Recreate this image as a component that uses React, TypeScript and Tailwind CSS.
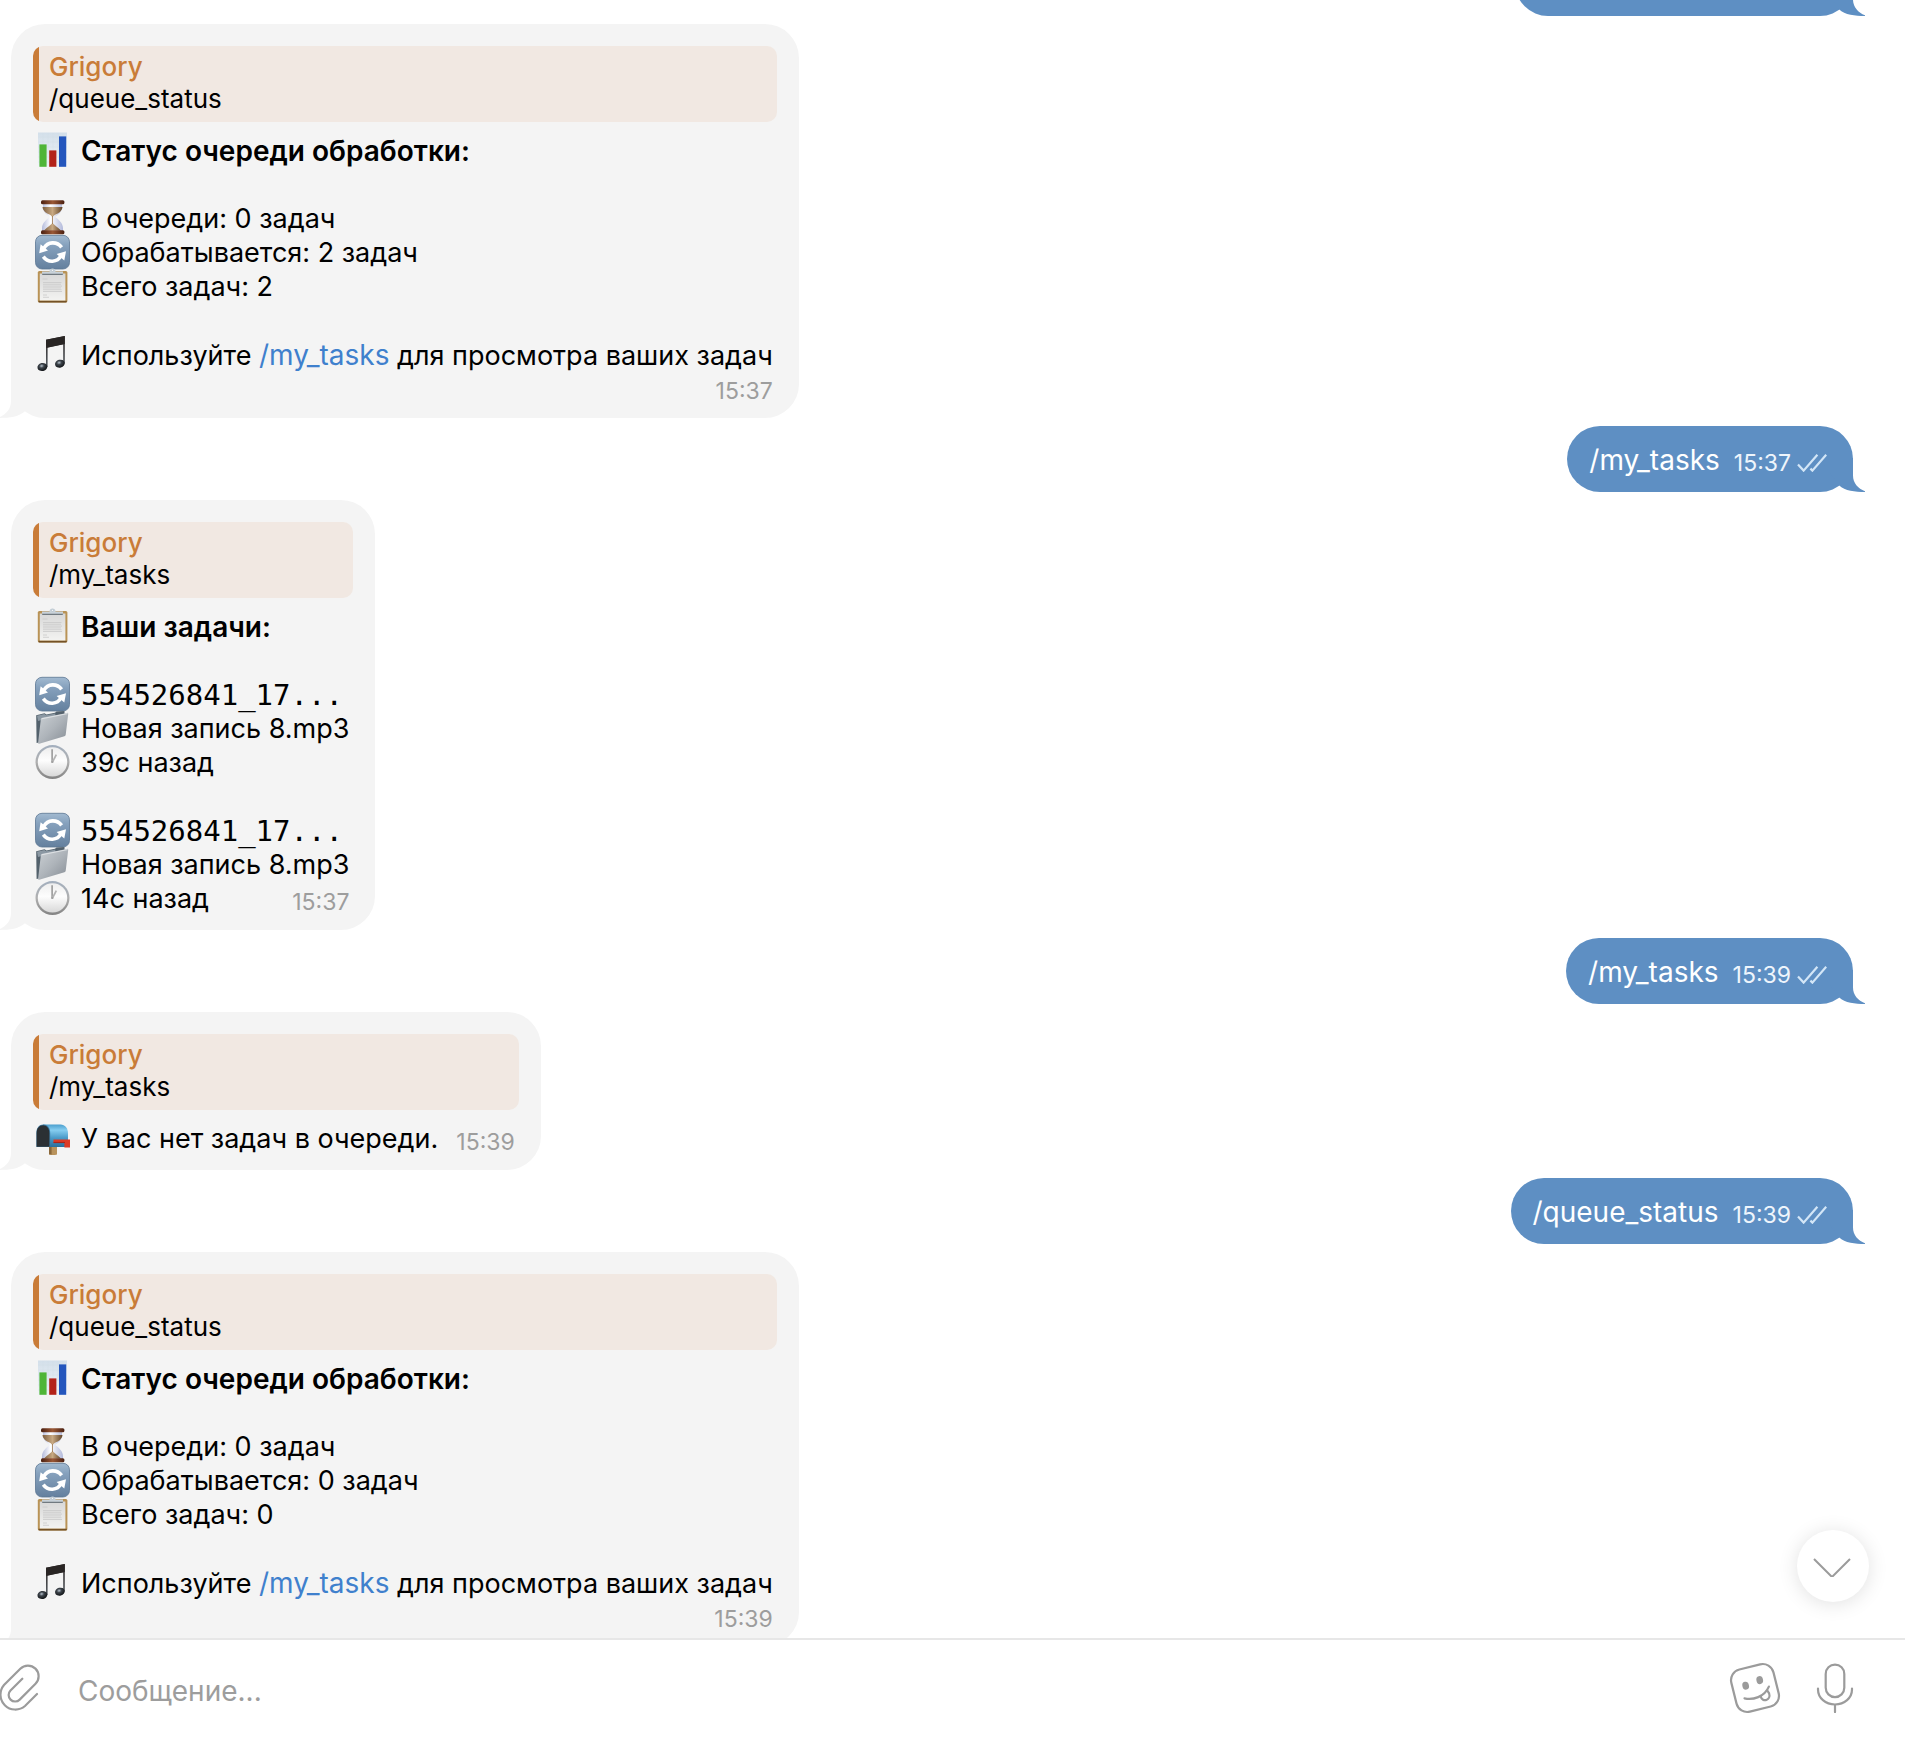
import type { ReactNode } from "react";

/* ---------- emoji drawings, 35 x 34 cell ---------- */

function Emoji({ label, children }: { label: string; children: ReactNode }) {
  return (
    <svg role="img" aria-label={label} viewBox="0 1 35 34" className="h-[34px] w-[35px] shrink-0 overflow-visible">
      {children}
    </svg>
  );
}

function ChartEmoji() {
  return (
    <Emoji label="Диаграмма">
      <defs>
        <linearGradient id="chartBg" x1="0" y1="0" x2="0" y2="1">
          <stop offset="0" stopColor="#d3dfea" />
          <stop offset="1" stopColor="#f1f5f9" />
        </linearGradient>
      </defs>
      <rect x="3" y="-0.5" width="29" height="34.3" fill="url(#chartBg)" />
      <path d="M3 4h29M3 9h29M3 14h29M3 19h29M3 24h29M3 29h29M8 0v33M13 0v33M18 0v33M23 0v33M28 0v33" stroke="#ccd9e5" strokeWidth="0.3" />
      <rect x="4.4" y="11.4" width="7.2" height="22.4" fill="#4fb537" />
      <rect x="14.2" y="17.4" width="7.2" height="16.4" fill="#b32219" />
      <rect x="24" y="3.4" width="7.2" height="30.4" fill="#2456bd" />
    </Emoji>
  );
}

function HourglassEmoji() {
  return (
    <Emoji label="Песочные часы">
      <defs>
        <linearGradient id="hgWood" x1="0" y1="0" x2="1" y2="0">
          <stop offset="0" stopColor="#4a1f10" />
          <stop offset="0.5" stopColor="#9a5836" />
          <stop offset="1" stopColor="#4a1f10" />
        </linearGradient>
        <linearGradient id="hgSand" x1="0" y1="0" x2="1" y2="0">
          <stop offset="0" stopColor="#7d5e3e" />
          <stop offset="0.5" stopColor="#c8a983" />
          <stop offset="1" stopColor="#624529" />
        </linearGradient>
        <linearGradient id="hgGlass" x1="0" y1="0" x2="1" y2="0">
          <stop offset="0" stopColor="#b3badb" />
          <stop offset="0.4" stopColor="#ffffff" />
          <stop offset="1" stopColor="#b3badb" />
        </linearGradient>
      </defs>
      <path d="M8 3h19v3c0 5-4 8-7 10 3 2 8 6 8 11v3H7v-3c0-5 5-9 8-11-3-2-7-5-7-10z" fill="url(#hgGlass)" />
      <path d="M7.5 6h20c-.4 4-4 6.500-7 7.500-2 1-2.200 2.300-3 2.300s-1-1.300-3-2.300c-3-1-6.600-3.500-7-7.500z" fill="url(#hgSand)" />
      <path d="M17.500 22c1 1.500 5 4 8.500 7.500H9c3.500-3.500 7.500-6 8.500-7.500z" fill="url(#hgSand)" />
      <path d="M17.500 15v8" stroke="#9b7449" strokeWidth="0.8" />
      <rect x="6" y="-0.8" width="23.400" height="4" rx="1.500" fill="url(#hgWood)" />
      <rect x="6" y="29.300" width="23.400" height="4" rx="1.500" fill="url(#hgWood)" />
    </Emoji>
  );
}

function RefreshEmoji() {
  return (
    <Emoji label="Обновление">
      <defs>
        <linearGradient id="refBg" x1="0" y1="0" x2="0" y2="1">
          <stop offset="0" stopColor="#a2bad1" />
          <stop offset="0.3" stopColor="#86a1bd" />
          <stop offset="1" stopColor="#64809e" />
        </linearGradient>
      </defs>
      <rect x="0.500" y="0.300" width="34" height="33.700" rx="6.500" fill="url(#refBg)" stroke="#5c7693" strokeWidth="0.800" />
      <g fill="none" stroke="#fff" strokeWidth="3.600">
        <path d="M9 13.200C12.500 6.500 22 6 26.600 12.400" />
        <path d="M8.300 21.600C13 28.200 22.500 27.600 26 20.800" />
      </g>
      <path d="M5.600 9.200 4.200 18.200l8.800-2.600z" fill="#fff" />
      <path d="M21.600 19 31 16.200l-1.700 9.200z" fill="#fff" />
    </Emoji>
  );
}

function ClipboardEmoji() {
  return (
    <Emoji label="Планшет">
      <defs>
        <linearGradient id="cbPaper" x1="0" y1="0" x2="0" y2="1">
          <stop offset="0" stopColor="#d8d8d8" />
          <stop offset="1" stopColor="#f3f3f1" />
        </linearGradient>
      </defs>
      <rect x="2.800" y="2" width="29.600" height="31.600" rx="1.600" fill="#b99356" />
      <path d="M3.500 31.800h28.300v.8q0 1-1 1H4.500q-1 0-1-1z" fill="#735126" />
      <rect x="4.800" y="4.500" width="25.600" height="27" fill="url(#cbPaper)" />
      <path d="M7.500 10h5M8 13.500h18.500M8 15.300h18M8 17.100h19M8 18.900h18M8 20.700h18.500M8 22.500h19M8 26h4M8 28.300h6" stroke="#c9c9c9" strokeWidth="0.800" />
      <path d="M7 2.600h7.500q0-3 3-3t3 3H28v2.200q0 1-1 1H8q-1 0-1-1z" fill="#c9d2d9" />
      <path d="M7 4.800h21v.4q0 .8-1 .8H8q-1 0-1-.8z" fill="#717a80" />
      <circle cx="17.500" cy="1.400" r="1.100" fill="#f4f4f4" stroke="#9db0bf" strokeWidth="0.500" />
    </Emoji>
  );
}

function MusicEmoji() {
  return (
    <Emoji label="Ноты">
      <defs>
        <radialGradient id="noteHead" cx="0.450" cy="0.350" r="0.600">
          <stop offset="0" stopColor="#b9c4cf" />
          <stop offset="0.400" stopColor="#3c434a" />
          <stop offset="1" stopColor="#14171a" />
        </radialGradient>
        <linearGradient id="noteStem" x1="0" y1="0" x2="0" y2="1">
          <stop offset="0" stopColor="#2b2422" />
          <stop offset="1" stopColor="#555c63" />
        </linearGradient>
      </defs>
      <path d="M11 2.800 29.800-1v27.500h-1.600V7.300L12.600 10.600v19.500H11z" fill="url(#noteStem)" />
      <path d="M11 2.800 29.800-1v7.900L11 10.900z" fill="#292524" />
      <ellipse cx="7.400" cy="30" rx="5" ry="4" transform="rotate(-14 7.400 30)" fill="url(#noteHead)" />
      <ellipse cx="24.900" cy="26.700" rx="4.900" ry="4" transform="rotate(-14 24.900 26.700)" fill="url(#noteHead)" />
    </Emoji>
  );
}

function FolderEmoji() {
  return (
    <Emoji label="Папка">
      <defs>
        <linearGradient id="fldFront" x1="0" y1="0" x2="1" y2="1">
          <stop offset="0" stopColor="#ccd1d5" />
          <stop offset="0.500" stopColor="#aeb4ba" />
          <stop offset="1" stopColor="#858c94" />
        </linearGradient>
      </defs>
      <path d="M1.200 4.200 9.500 2.300l2 1.200 8.500-1.700 1.500-1.300L29.500 0v4L4 31.500l-2.400.5z" fill="#53616c" />
      <path d="M2 4.800 9.300 3l2 1.300 9-1.700v3L3 10z" fill="#8b98a3" />
      <path d="M5.800 8.600q.2-1.500 1.600-1.800L32 1.900q1.300-.2 1.200 1l-2.500 20.800q-.2 1.200-1.300 1.600L4.300 32.700q-1.400.3-1.200-1z" fill="url(#fldFront)" />
      <path d="M6.600 7.800 32.500 2.600" stroke="#e8ebed" strokeWidth="0.800" />
    </Emoji>
  );
}

function ClockEmoji() {
  return (
    <Emoji label="Часы">
      <defs>
        <linearGradient id="clkRim" x1="0" y1="0" x2="0" y2="1">
          <stop offset="0" stopColor="#a3afbe" />
          <stop offset="0.500" stopColor="#b0b0b0" />
          <stop offset="1" stopColor="#828282" />
        </linearGradient>
        <linearGradient id="clkFace" x1="0" y1="0" x2="0" y2="1">
          <stop offset="0" stopColor="#eeeeee" />
          <stop offset="0.450" stopColor="#fdfdfd" />
          <stop offset="1" stopColor="#d8d8d8" />
        </linearGradient>
      </defs>
      <circle cx="17.500" cy="17.100" r="17" fill="url(#clkRim)" />
      <circle cx="17.500" cy="16.900" r="14.700" fill="url(#clkFace)" />
      <path d="M17.100 4.200v13.300" stroke="#8c8c8c" strokeWidth="1.400" />
      <path d="M17.300 17.300 21.300 9.600" stroke="#b4b4b4" strokeWidth="1.800" />
      <circle cx="17.300" cy="17" r="1.100" fill="#a0a0a0" />
    </Emoji>
  );
}

function MailboxEmoji() {
  return (
    <Emoji label="Почтовый ящик">
      <defs>
        <linearGradient id="mbBody" x1="0" y1="0" x2="0" y2="1">
          <stop offset="0" stopColor="#4b9fce" />
          <stop offset="0.250" stopColor="#85cdf0" />
          <stop offset="0.600" stopColor="#4a9ac8" />
          <stop offset="1" stopColor="#2a6f9c" />
        </linearGradient>
      </defs>
      <path d="M14 24h8v9.500q-4 1.200-8 0z" fill="#b9935c" />
      <path d="M14 24h2.600v9.600l-2.600-.3z" fill="#8a683b" />
      <path d="M8 3.500h17.500c4.500 0 7.500 3.500 7.500 9V26H13z" fill="url(#mbBody)" />
      <path d="M1.400 26V12c0-5.500 2.800-8.500 6.900-8.500s6.900 3 6.900 8.500v14z" fill="#3d7ca5" />
      <path d="M1.600 25.800V12.300c0-5 2.700-8 6.500-8s6.300 3 6.300 8v13.500z" fill="#2b3034" />
      <path d="M18.500 18.400H35v8h-5.600v-4.500H18.500z" fill="#dc3a26" />
      <path d="M18.500 20.900H30v1.200H18.500z" fill="#a8251a" />
    </Emoji>
  );
}

/* ---------- interface icons ---------- */

function Ticks() {
  return (
    <svg viewBox="0 0 30 18" aria-label="Прочитано" className="h-[18px] w-[30px] shrink-0" fill="none" stroke="#d3e6f7" strokeWidth="2.200">
      <path d="M1 10.500 6.600 16.600 20.400.8" />
      <path d="M13.400 14.600 15.400 16.600 29.200.8" />
    </svg>
  );
}

function Tail({ side }: { side: "in" | "out" }) {
  return (
    <svg
      aria-hidden="true"
      viewBox="0 0 46 34"
      className={
        side === "in"
          ? "absolute bottom-0 -left-3 h-[34px] w-[46px] fill-[#f4f4f4]"
          : "absolute -right-3 bottom-0 h-[34px] w-[46px] -scale-x-100 fill-[#5e8fc3]"
      }
    >
      <path d="M12 0V17.500C12 25 7 30.500 0 33.300V34C10 34 20 33 26 27.300L46 0Z" />
    </svg>
  );
}

/* ---------- messages ---------- */

function Quote({ text }: { text: string }) {
  return (
    <blockquote className="flex h-[76px] overflow-hidden rounded-[10px] bg-[#f1e8e2] text-[26px] leading-8">
      <div className="w-1.5 shrink-0 bg-[#c97c38]" />
      <div className="pt-[5px] pl-2.5">
        <div className="font-medium text-[#c97c38]">Grigory</div>
        <div>{text}</div>
      </div>
    </blockquote>
  );
}

function Line({ icon, children, time }: { icon: ReactNode; children: ReactNode; time?: string }) {
  return (
    <div className="flex h-[34px] items-center pl-0.5">
      {icon}
      <div className="pr-1 pl-[11px] whitespace-nowrap">{children}</div>
      {time && <Time value={time} />}
    </div>
  );
}

function Time({ value }: { value: string }) {
  return <time className="ml-auto pt-1.5 pr-1 pl-3.5 text-[23px] leading-7 text-[#9d9d9d]">{value}</time>;
}

function Incoming({ quote, children }: { quote: string; children: ReactNode }) {
  return (
    <article className="relative w-fit rounded-[34px] bg-[#f4f4f4] px-[22px] pt-[22px] pb-3.5">
      <Tail side="in" />
      <Quote text={quote} />
      <div className="relative mt-3 leading-[34px]">{children}</div>
    </article>
  );
}

function Outgoing({ text, time }: { text: string; time: string }) {
  return (
    <article className="relative flex h-[66px] w-fit items-center self-end rounded-[33px] bg-[#5e8fc3] pr-[26px] pl-[22px] text-white">
      <Tail side="out" />
      <span className="relative pt-0.5 text-[28px]">{text}</span>
      <time className="relative pt-2 pl-3.5 text-[23px] text-[#eef5fc]">{time}</time>
      <span className="relative pt-2 pl-1.5">
        <Ticks />
      </span>
    </article>
  );
}

/* Lower edge of the previous message, scrolled out of view */
function ScrolledOutgoing() {
  return (
    <div aria-hidden="true" className="relative h-[66px] w-[338px] self-end rounded-[33px] bg-[#5e8fc3]">
      <Tail side="out" />
    </div>
  );
}

function StatusMessage({ active, total, time }: { active: number; total: number; time: string }) {
  return (
    <Incoming quote="/queue_status">
      <Line icon={<ChartEmoji />}>
        <b className="text-[28px] font-semibold">Статус очереди обработки:</b>
      </Line>
      <div className="h-[34px]" />
      <Line icon={<HourglassEmoji />}>В очереди: 0 задач</Line>
      <Line icon={<RefreshEmoji />}>Обрабатывается: {active} задач</Line>
      <Line icon={<ClipboardEmoji />}>Всего задач: {total}</Line>
      <div className="h-[34px]" />
      <Line icon={<MusicEmoji />}>
        Используйте{" "}
        <a href="#my_tasks" className="text-[28px] text-[#3f80cd]">
          /my_tasks
        </a>{" "}
        для просмотра ваших задач
      </Line>
      <div className="flex h-8 items-center">
        <Time value={time} />
      </div>
    </Incoming>
  );
}

function Task({ age, time }: { age: string; time?: string }) {
  return (
    <>
      <div className="h-[34px]" />
      <Line icon={<RefreshEmoji />}>
        <code className="font-['DejaVu_Sans_Mono',monospace] text-[29px]">554526841_17...</code>
      </Line>
      <Line icon={<FolderEmoji />}>Новая запись 8.mp3</Line>
      <Line icon={<ClockEmoji />} time={time}>
        {age}
      </Line>
    </>
  );
}

export default function App() {
  return (
    <div className="flex h-screen flex-col overflow-hidden bg-white font-[Inter,sans-serif] text-[27px] leading-[34px] text-black">
      <main className="relative flex min-h-0 flex-1 flex-col justify-end overflow-hidden">
        <div className="-mb-2 flex flex-col gap-2 pr-[52px] pl-[11px]">
          <ScrolledOutgoing />
          <StatusMessage active={2} total={2} time="15:37" />
          <Outgoing text="/my_tasks" time="15:37" />
          <Incoming quote="/my_tasks">
            <Line icon={<ClipboardEmoji />}>
              <b className="text-[28px] font-semibold">Ваши задачи:</b>
            </Line>
            <Task age="39с назад" />
            <Task age="14с назад" time="15:37" />
          </Incoming>
          <Outgoing text="/my_tasks" time="15:39" />
          <Incoming quote="/my_tasks">
            <Line icon={<MailboxEmoji />} time="15:39">
              У вас нет задач в очереди.
            </Line>
          </Incoming>
          <Outgoing text="/queue_status" time="15:39" />
          <StatusMessage active={0} total={0} time="15:39" />
        </div>
        <button
          type="button"
          aria-label="Вниз"
          className="absolute right-9 bottom-9 flex size-[72px] items-center justify-center rounded-full bg-white shadow-[0_2px_20px_rgba(0,0,0,0.12)]"
        >
          <svg viewBox="0 0 40 22" className="h-[22px] w-10" fill="none" stroke="#9b9b9b" strokeWidth="2">
            <path d="M1 4 19 22 37 4" />
          </svg>
        </button>
      </main>

      <form className="flex h-[100px] shrink-0 items-center border-t-2 border-[#e7e7e7] pr-[51px]">
        <button type="button" aria-label="Прикрепить файл" className="shrink-0">
          <svg viewBox="0 0 40 47" className="h-[47px] w-10 overflow-visible" fill="none" stroke="#9b9b9b" strokeWidth="2.200" strokeLinecap="round">
            <path d="M37 28 25 40A14.900 14.900 0 0 1 4 19L20.300 2.700A10.700 10.700 0 0 1 35.500 17.800L19.700 33.600A6.400 6.400 0 0 1 10.500 24.500L22.300 12.700" />
          </svg>
        </button>
        <input
          type="text"
          aria-label="Сообщение"
          placeholder="Сообщение..."
          className="ml-[38px] min-w-0 flex-1 bg-transparent pt-1 text-[28px] outline-none placeholder:text-[#9d9d9d]"
        />
        <button type="button" aria-label="Стикеры" className="shrink-0 pb-0.5">
          <svg viewBox="0 0 52 52" className="size-[52px]" fill="none" stroke="#9b9b9b" strokeWidth="2.200" strokeLinecap="round">
            <g transform="rotate(-14 26 26)">
              <rect x="4.300" y="4.300" width="43.400" height="43.400" rx="11" />
              <ellipse cx="17.500" cy="21.500" rx="3.300" ry="4" fill="#9b9b9b" stroke="none" />
              <ellipse cx="32.500" cy="19.500" rx="3.300" ry="4" fill="#9b9b9b" stroke="none" />
              <path d="M13.300 33.500C21 37.500 33 37 39.800 28" />
              <path d="M29.500 35.500C29.500 42.500 39 41.800 38.400 34.500L37.300 31.600" />
            </g>
          </svg>
        </button>
        <button type="button" aria-label="Записать голосовое сообщение" className="ml-[35px] shrink-0 pb-0.5">
          <svg viewBox="0 0 38 50" className="h-[50px] w-[38px]" fill="none" stroke="#9b9b9b" strokeWidth="2.200" strokeLinecap="round">
            <rect x="9.700" y="1.600" width="18.600" height="32.500" rx="9.300" />
            <path d="M2 25.500V26.500C2 35 9.500 41.500 19 41.500S36 35 36 26.500V25.500M19 41.500V49" />
          </svg>
        </button>
      </form>
    </div>
  );
}
